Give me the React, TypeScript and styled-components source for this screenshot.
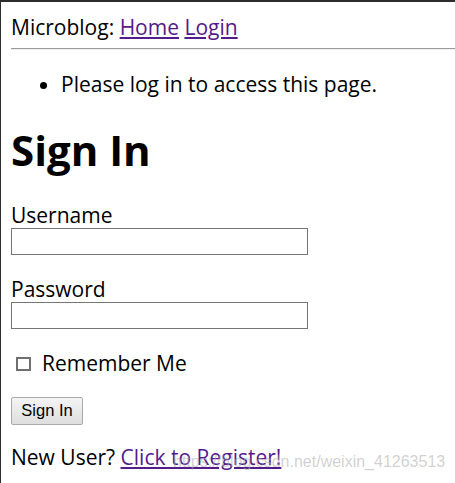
import React from "react";
import styled, { createGlobalStyle } from "styled-components";

const GlobalStyle = createGlobalStyle`
  html, body {
    margin: 0;
    padding: 0;
    background: #ffffff;
  }
  body {
    font-family: "Open Sans", "Noto Sans", sans-serif;
    color: #000000;
  }
`;

const Frame = styled.div`
  box-sizing: border-box;
  min-height: 100vh;
  border-top: 2px solid #2d2d2d;
  border-left: 1px solid #2d2d2d;
  padding: 12px 0 0 10px;
  position: relative;
  overflow: hidden;
  font-size: 21px;
  line-height: 26px;
`;

const Nav = styled.div`
  white-space: nowrap;
`;

const Link = styled.a`
  color: #551a8b;
  text-decoration: underline;
`;

const Rule = styled.hr`
  margin: 8px 0 0;
  width: 120%;
  height: 0;
  border: 0;
  border-top: 1px solid #9a9a9a;
  border-bottom: 1px solid #eeeeee;
`;

const Messages = styled.ul`
  margin: 21px 0 0;
  padding-left: 50px;
  list-style: disc;
`;

const Heading = styled.h1`
  margin: 26px 0 0;
  font-size: 42px;
  line-height: 53px;
  font-weight: 700;
`;

const Form = styled.form`
  margin: 26px 0 0;
`;

const Field = styled.div<{ $gap?: number }>`
  margin-top: ${(p) => p.$gap ?? 0}px;
`;

const FieldLabel = styled.label`
  display: block;
  height: 26px;
  line-height: 26px;
`;

const TextInput = styled.input`
  display: block;
  box-sizing: border-box;
  width: 297px;
  height: 27px;
  margin: 0;
  padding: 2px 3px;
  border: 1px solid #767676;
  background: #ffffff;
  font-size: 16px;
`;

const CheckRow = styled.label`
  display: flex;
  align-items: center;
  height: 26px;
`;

const Box = styled.input`
  appearance: none;
  box-sizing: border-box;
  width: 15px;
  height: 14px;
  margin: 1px 11px 0 5px;
  border: 2px solid #6f6f6f;
  background: #ffffff;
  border-radius: 0;
`;

const Submit = styled.button`
  box-sizing: border-box;
  width: 72px;
  height: 28px;
  margin: 0;
  padding: 0 0 1px;
  border: 1px solid #a9a9a9;
  border-radius: 2px;
  background: linear-gradient(#f4f4f4, #dedede);
  font-family: "Liberation Sans", Arial, sans-serif;
  font-size: 16.5px;
  color: #000000;
`;

const Footer = styled.p`
  margin: 19px 0 0;
  white-space: nowrap;
`;

const Watermark = styled.div`
  position: absolute;
  left: 172px;
  top: 451px;
  font-family: "Liberation Sans", Arial, sans-serif;
  font-size: 16px;
  line-height: 18px;
  color: rgba(170, 170, 170, 0.55);
  pointer-events: none;
  white-space: nowrap;
`;

export default function App() {
  return (
    <>
      <GlobalStyle />
      <Frame>
        <Nav>
          Microblog: <Link href="#">Home</Link> <Link href="#">Login</Link>
        </Nav>
        <Rule />
        <Messages>
          <li>Please log in to access this page.</li>
        </Messages>
        <Heading>Sign In</Heading>
        <Form onSubmit={(e) => e.preventDefault()}>
          <Field>
            <FieldLabel htmlFor="username">Username</FieldLabel>
            <TextInput id="username" type="text" />
          </Field>
          <Field $gap={21}>
            <FieldLabel htmlFor="password">Password</FieldLabel>
            <TextInput id="password" type="password" />
          </Field>
          <Field $gap={21}>
            <CheckRow>
              <Box type="checkbox" />
              Remember Me
            </CheckRow>
          </Field>
          <Field $gap={19}>
            <Submit type="submit">Sign In</Submit>
          </Field>
        </Form>
        <Footer>
          New User? <Link href="#">Click to Register!</Link>
        </Footer>
        <Watermark>https://blog.csdn.net/weixin_41263513</Watermark>
      </Frame>
    </>
  );
}
